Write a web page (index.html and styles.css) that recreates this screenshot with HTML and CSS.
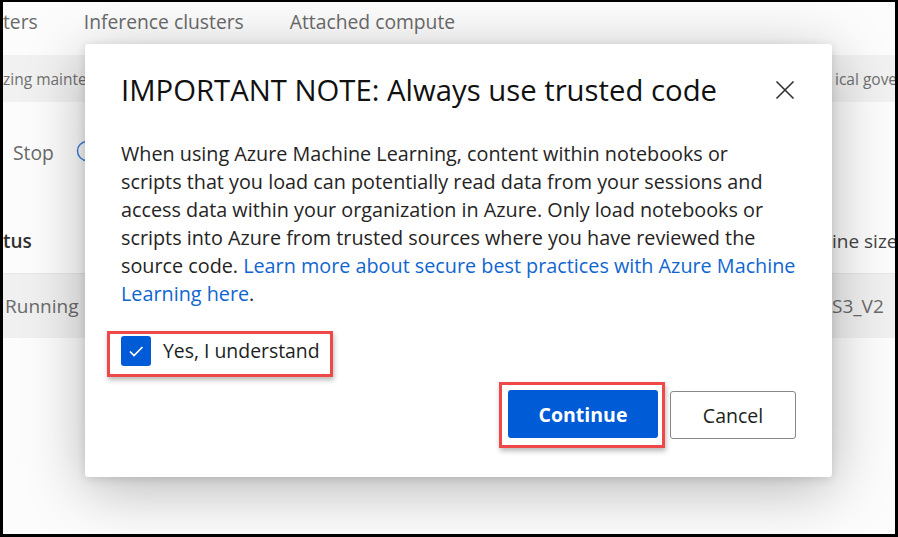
FILE: index.html
```html
<!DOCTYPE html>
<html lang="en">
<head>
<meta charset="utf-8">
<title>Compute - Azure Machine Learning</title>
<link rel="stylesheet" href="styles.css">
</head>
<body>
<div class="frame">
  <div class="page">
    <nav class="tabs">
      <span class="tab">ters</span>
      <span class="tab">Inference clusters</span>
      <span class="tab">Attached compute</span>
    </nav>
    <div class="banner">
      <span class="banner-left">zing maintenance and costs of your compute resources</span>
      <span class="banner-right">ical governance</span>
    </div>
    <div class="toolbar">
      <span class="tool">Stop</span>
      <span class="tool-icon">
        <svg width="22" height="22" viewBox="0 0 22 22"><circle cx="11" cy="11" r="9.5" fill="none" stroke="#3b82d8" stroke-width="1.5"/></svg>
      </span>
    </div>
    <div class="table">
      <div class="thead">
        <span class="cell">tus</span>
        <span class="cell right">ine size</span>
      </div>
      <div class="trow">
        <span class="cell">Running</span>
        <span class="cell right">S3_V2</span>
      </div>
    </div>
  </div>

  <div class="dialog" role="dialog" aria-labelledby="dlg-title">
    <div class="dialog-head">
      <h1 id="dlg-title" class="dialog-title">IMPORTANT NOTE: Always use trusted code</h1>
      <button class="close" aria-label="Close">
        <svg width="20" height="20" viewBox="0 0 20 20"><path d="M1.5 1.5 L18.5 18.5 M18.5 1.5 L1.5 18.5" stroke="#323130" stroke-width="1.6" fill="none"/></svg>
      </button>
    </div>
    <p class="dialog-body">When using Azure Machine Learning, content within notebooks or<br>scripts that you load can potentially read data from your sessions and<br>access data within your organization in Azure. Only load notebooks or<br>scripts into Azure from trusted sources where you have reviewed the<br>source code. <a class="link" href="#">Learn more about secure best practices with Azure Machine<br>Learning here</a>.</p>
    <div class="check-wrap">
      <label class="highlight check-row">
        <span class="checkbox">
          <svg width="20" height="20" viewBox="0 0 20 20"><path d="M4 10.5 L8 14.5 L16.5 6" stroke="#fff" stroke-width="1.7" fill="none"/></svg>
        </span>
        <span class="check-label">Yes, I understand</span>
      </label>
    </div>
    <div class="actions">
      <div class="highlight btn-wrap">
        <button class="btn primary">Continue</button>
      </div>
      <button class="btn secondary">Cancel</button>
    </div>
  </div>
</div>
</body>
</html>
```

FILE: styles.css
```css
* { box-sizing: border-box; }
html, body { margin: 0; padding: 0; background: #000; }
body { font-family: "Open Sans", "Noto Sans", sans-serif; }

.frame {
  position: relative;
  width: 892px;
  height: 532px;
  margin: 2px 3px 3px 3px;
  background: #fff;
  overflow: hidden;
}

.page {
  width: 892px;
  height: 532px;
  color: #666;
  background: #fcfcfc;
}

.tabs {
  display: flex;
  gap: 46px;
  height: 53px;
  padding-top: 6px;
  font-size: 19.3px;
  line-height: 28px;
  color: #6a6a6a;
  white-space: nowrap;
}

.banner {
  display: flex;
  height: 47px;
  align-items: center;
  background: #f1f1f1;
  font-size: 15.5px;
  color: #707070;
  white-space: nowrap;
  overflow: hidden;
}
.banner-left { flex: none; width: 832px; overflow: hidden; }
.banner-right { flex: none; }

.toolbar {
  display: flex;
  align-items: center;
  height: 100px;
  padding: 0 0 0 10px;
  gap: 22px;
  font-size: 19.3px;
  color: #6a6a6a;
}
.tool-icon { display: flex; margin-top: -3px; }

.table { font-size: 19px; }
.thead {
  display: grid;
  grid-template-columns: 829px 1fr;
  height: 71px;
  align-items: center;
  padding-top: 6px;
  color: #323130;
}
.thead .cell:first-child { font-weight: 600; }
.thead .right { font-weight: 400; color: #444; }
.trow {
  display: grid;
  grid-template-columns: 829px 1fr;
  height: 65px;
  align-items: center;
  background: #f0f0f0;
  border-top: 1px solid #e6e6e6;
  color: #6a6a6a;
}
.trow .cell:first-child { padding-left: 2px; }
.cell.right { white-space: nowrap; }

/* Dialog */
.dialog {
  position: absolute;
  left: 82px;
  top: 42px;
  width: 747px;
  height: 433px;
  background: #fff;
  border-radius: 3px;
  box-shadow: 0 12px 60px rgba(0,0,0,0.28), 0 2px 10px rgba(0,0,0,0.12);
  padding: 28px 36px 0 36px;
  color: #201f1e;
}

.dialog-head {
  display: flex;
  align-items: center;
  justify-content: space-between;
  height: 36px;
}
.dialog-title {
  margin: 0;
  font-size: 29.3px;
  font-weight: 500;
  line-height: 36px;
  color: #111;
  white-space: nowrap;
}
.close {
  display: flex;
  padding: 0;
  margin-right: 1px;
  border: 0;
  background: none;
  cursor: pointer;
}

.dialog-body {
  margin: 32px 0 0 0;
  font-size: 19.8px;
  line-height: 28px;
  color: #252423;
  white-space: nowrap;
}
.link { color: #0f66d0; text-decoration: none; }

.highlight {
  border: 3px solid #ef4848;
  box-shadow: 1px 3px 5px rgba(0,0,0,0.28);
}

.check-wrap { margin: 23px 0 0 -14px; display: flex; }
.check-row {
  display: flex;
  align-items: center;
  gap: 12px;
  padding: 2px 10px 8px 11px;
  cursor: pointer;
}
.checkbox {
  display: flex;
  align-items: center;
  justify-content: center;
  width: 30px;
  height: 30px;
  border-radius: 3px;
  background: #005bd6;
}
.check-label {
  font-size: 19.4px;
  line-height: 30px;
  color: #201f1e;
}

.actions {
  display: flex;
  justify-content: flex-end;
  align-items: center;
  gap: 5px;
  margin-top: 5px;
}
.btn-wrap { padding: 5px 4px 7px 6px; display: flex; }
.btn {
  height: 48px;
  border-radius: 3px;
  font-family: inherit;
  font-size: 19.5px;
  cursor: pointer;
}
.primary {
  width: 150px;
  border: 0;
  background: #005bd6;
  color: #fff;
  font-weight: 700;
}
.secondary {
  width: 126px;
  background: #fff;
  border: 1px solid #8a8886;
  color: #201f1e;
}
```
